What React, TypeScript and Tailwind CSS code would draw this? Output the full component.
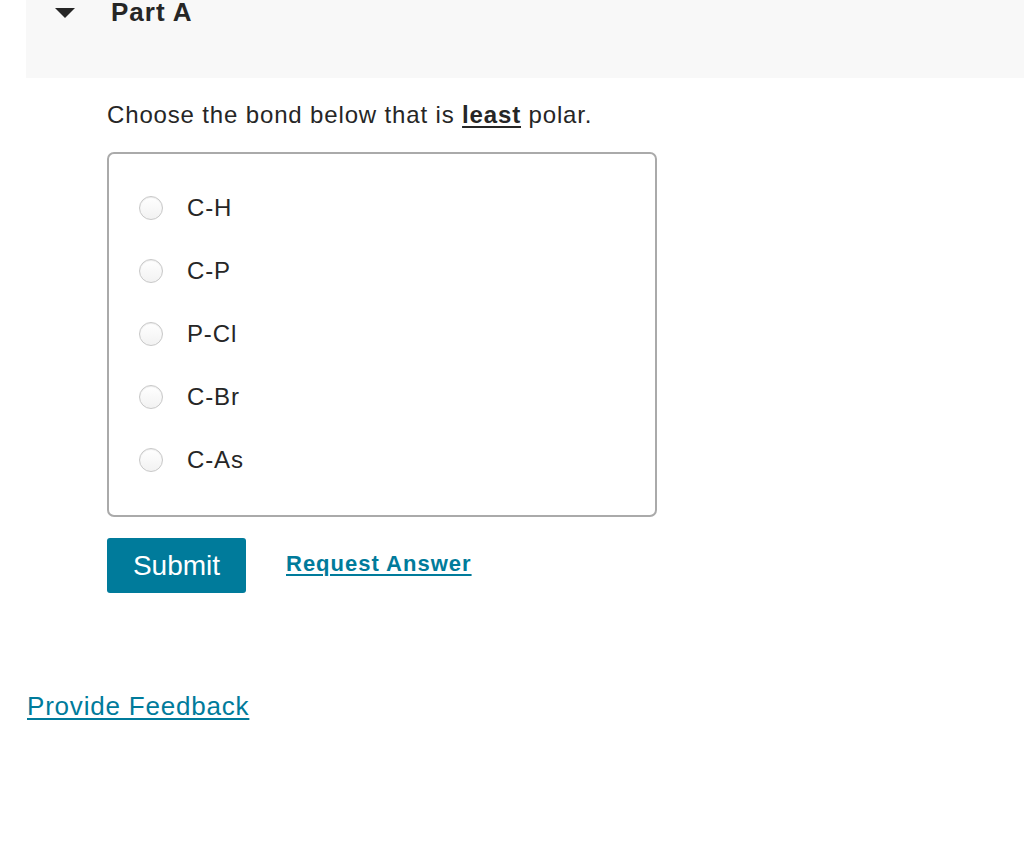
import React from "react";

const options = ["C-H", "C-P", "P-Cl", "C-Br", "C-As"];

export default function App() {
  return (
    <div className="w-[1024px] h-[846px] bg-white text-[#262626]" style={{ fontFamily: '"Liberation Sans", Arial, sans-serif' }}>
      <div className="ml-[26px] h-[78px] bg-[#f8f8f8] flex items-start">
        <div className="ml-[29px] pt-[8px]">
          <svg width="20" height="10" viewBox="0 0 20 10" className="block">
            <polygon points="0,0 20,0 10,10" fill="#262626" />
          </svg>
        </div>
        <div className="ml-[36px] text-[26px] font-bold leading-none tracking-[1px] -mt-[1px] text-[#262626]">Part A</div>
      </div>
      <div className="pl-[107px]">
        <p className="mt-[23px] text-[24px] leading-[28px] tracking-[0.85px]">
          Choose the bond below that is <span className="font-bold underline underline-offset-[3px]">least</span> polar.
        </p>
        <div className="mt-[23px] w-[550px] h-[365px] border-2 border-[#aaaaaa] rounded-[7px] pt-[42px] pl-[30px] flex flex-col gap-[39px]">
          {options.map((o) => (
            <label key={o} className="flex items-center h-[24px]">
              <span className="w-[24px] h-[24px] rounded-full border border-[#c8c8c8] bg-gradient-to-b from-[#ffffff] to-[#f2f2f2] shadow-[inset_0_1px_1px_rgba(0,0,0,0.08)]" />
              <span className="ml-[24px] text-[24px] leading-none tracking-[0.85px]">{o}</span>
            </label>
          ))}
        </div>
        <div className="mt-[21px] flex items-center">
          <button className="w-[139px] h-[55px] bg-[#007b9b] text-white text-[28px] rounded-[3px]">Submit</button>
          <a className="ml-[40px] text-[22px] font-bold tracking-[1px] text-[#007b9b] underline underline-offset-[3px] -mt-[4px]">Request Answer</a>
        </div>
      </div>
      <div className="pl-[27px] mt-[94px]">
        <a className="text-[26px] tracking-[0.8px] text-[#007b9b] underline underline-offset-[3px]">Provide Feedback</a>
      </div>
    </div>
  );
}
